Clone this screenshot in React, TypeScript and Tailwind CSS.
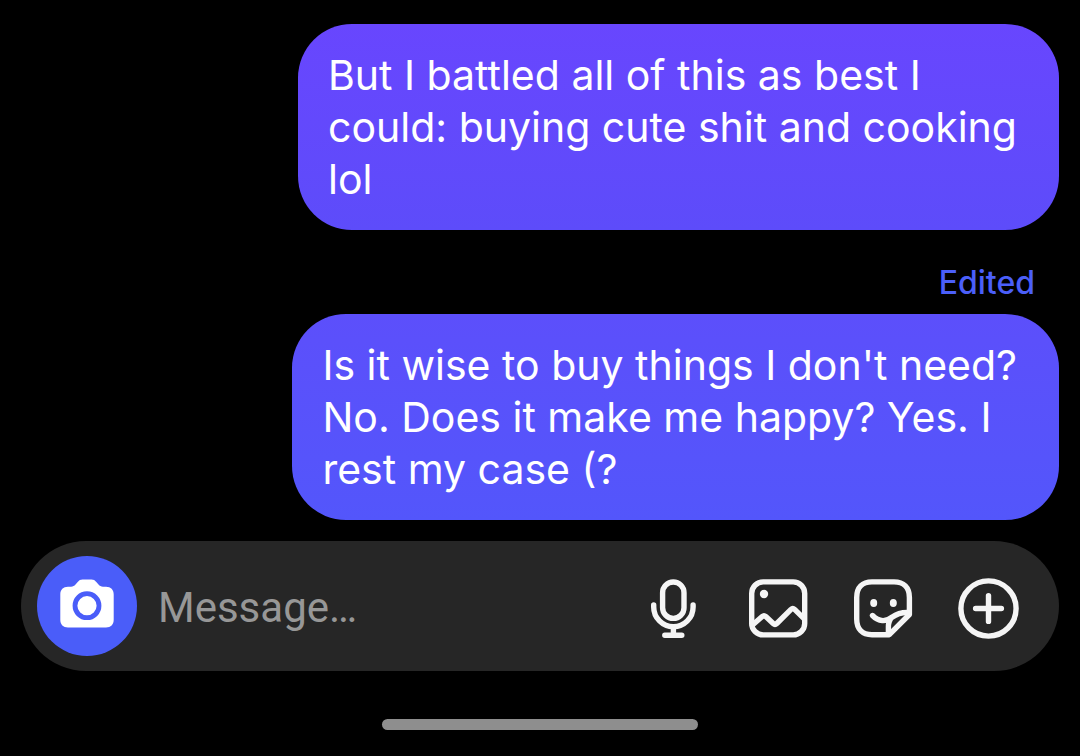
import type { ReactNode } from "react";

type Message = {
  id: number;
  text: string;
  edited?: boolean;
  tone: string;
};

const messages: Message[] = [
  {
    id: 1,
    text: "But I battled all of this as best I\ncould: buying cute shit and cooking\nlol",
    tone: "from-[#6846fe] to-[#5d4cfa]",
  },
  {
    id: 2,
    text: "Is it wise to buy things I don't need?\nNo. Does it make me happy? Yes. I\nrest my case (?",
    edited: true,
    tone: "from-[#5c4ffb] to-[#5356fb]",
  },
];

function Bubble({ message }: { message: Message }) {
  return (
    <li className="flex flex-col items-end">
      {message.edited ? (
        <span className="mb-[11px] pr-6 text-[32px] leading-10 font-medium text-[#4b5ff9]">
          Edited
        </span>
      ) : null}
      <p
        className={`rounded-[54px] bg-linear-to-b py-[25px] pr-[42px] pl-[30px] text-[41px] leading-[52px] whitespace-pre-line text-white ${message.tone}`}
      >
        {message.text}
      </p>
    </li>
  );
}

function IconButton({ label, children }: { label: string; children: ReactNode }) {
  return (
    <button type="button" aria-label={label} className="shrink-0 text-[#f5f5f5]">
      <svg
        viewBox="0 0 63 63"
        className="size-[63px]"
        fill="none"
        stroke="currentColor"
        strokeWidth="5.4"
        strokeLinecap="round"
        strokeLinejoin="round"
      >
        {children}
      </svg>
    </button>
  );
}

function CameraButton() {
  return (
    <button
      type="button"
      aria-label="Camera"
      className="flex size-[100px] shrink-0 items-center justify-center rounded-full bg-[#4a5df9]"
    >
      <svg viewBox="0 0 64 64" className="size-16">
        <path
          fill="#fff"
          d="M13 12.7h3c2 0 3.300-.8 4.500-2.200l2.200-2.500C24.100 6.300 25.500 5.500 27.500 5.500h9c2 0 3.400.8 4.800 2.500l2.200 2.500c1.200 1.400 2.500 2.200 4.500 2.200H51c4.800 0 7.700 2.900 7.700 7.700v25.300c0 4.800-2.900 7.700-7.700 7.700H13c-4.800 0-7.700-2.900-7.700-7.700V20.400c0-4.800 2.900-7.700 7.700-7.700Z"
        />
        <circle cx="32" cy="31.7" r="12" fill="none" stroke="#4a5df9" strokeWidth="4.8" />
      </svg>
    </button>
  );
}

function Composer() {
  return (
    <form className="flex h-[130px] items-center rounded-full bg-[#262626] pr-[39px] pl-4">
      <CameraButton />
      <input
        type="text"
        aria-label="Message"
        placeholder="Message…"
        className="mt-1 ml-[21px] min-w-0 flex-1 bg-transparent font-['Roboto','Liberation_Sans',sans-serif] text-[42px] leading-[52px] text-white outline-none placeholder:text-[#979797]"
      />
      <div className="flex gap-[42px] pt-1">
        <IconButton label="Voice message">
          <rect x="20.6" y="5" width="21.4" height="36.4" rx="10.7" />
          <path d="M11.7 28v2a19.7 19.7 0 0 0 39.4 0v-2M31.4 50v8M22.8 58.3h17" />
        </IconButton>
        <IconButton label="Photo">
          <rect x="4.7" y="4.9" width="53" height="53" rx="11.5" />
          <circle cx="17" cy="17" r="4.2" fill="currentColor" stroke="none" />
          <path d="M5.5 48 15.2 39.5q1.8-1.6 3.6 0l7.4 7q1.8 1.7 3.6 0L44 32.4q1.8-1.7 3.6 0l9.4 9.3" />
        </IconButton>
        <IconButton label="Sticker">
          <path d="M57.4 37.5V20.5C57.4 10.5 51.7 4.9 42 4.9H20C10.3 4.9 4.7 10.5 4.7 20.5V42C4.7 52 10.3 57.7 20 57.7H37.3Z" />
          <path d="M20.5 38.5C26.5 44.7 34 45 40 40.2 46 35.8 51.5 35.2 57 35.5M36.4 57V50C36.4 46.5 37.3 43 40 40.2" />
          <ellipse cx="21.7" cy="26" rx="3.5" ry="3.9" fill="currentColor" stroke="none" />
          <ellipse cx="41.3" cy="26" rx="3.5" ry="3.9" fill="currentColor" stroke="none" />
        </IconButton>
        <IconButton label="More">
          <circle cx="31.5" cy="31.5" r="27.6" />
          <path d="M31.5 18.6v25.8M18.6 31.5h25.8" />
        </IconButton>
      </div>
    </form>
  );
}

export default function App() {
  return (
    <main className="min-h-screen bg-black px-[21px] pt-6 font-['Inter','Liberation_Sans',sans-serif]">
      <ul className="flex flex-col gap-[33px]">
        {messages.map((m) => (
          <Bubble key={m.id} message={m} />
        ))}
      </ul>
      <div className="mt-[21px]">
        <Composer />
      </div>
      <div className="mx-auto mt-12 h-[11px] w-[316px] rounded-full bg-[#8e8e8e]" />
    </main>
  );
}
